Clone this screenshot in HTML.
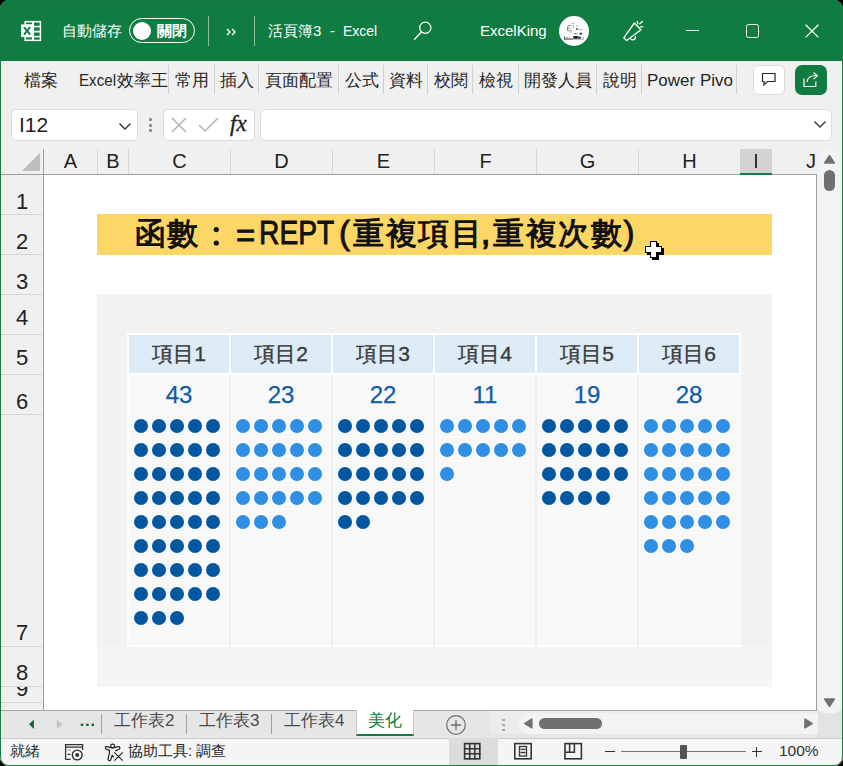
<!DOCTYPE html>
<html><head><meta charset="utf-8">
<style>
*{box-sizing:border-box;margin:0;padding:0}
html,body{width:843px;height:766px;overflow:hidden;background:#000}
body{font-family:"Liberation Sans",sans-serif;position:relative}
.a{position:absolute}
#win{position:absolute;left:0;top:0;width:843px;height:766px;border-radius:9px;overflow:hidden;background:#f0f0f0}
#title{position:absolute;left:0;top:0;width:843px;height:61px;background:#107c41;color:#fff}
.wt{color:#fff;font-size:14px;white-space:nowrap}
.tab{position:absolute;top:71px;font-size:17px;color:#262626;white-space:nowrap;line-height:20px}
.tsep{position:absolute;top:65px;width:1px;height:29px;background:#d0d0d0}
.ch{position:absolute;top:149px;height:25px;font-size:20px;color:#222;text-align:center;line-height:24px;border-right:1px solid #d5d5d5}
.rh{position:absolute;left:1px;width:42px;font-size:22px;color:#222;text-align:center;border-bottom:1px solid #d5d5d5;display:flex;align-items:flex-end;justify-content:center;overflow:hidden}
.rh span{display:block;line-height:20px;margin-bottom:2px}
.gl{position:absolute;background:#e1e1e1}
.sh{top:710px;font-size:17px;line-height:22px;color:#4a4a4a;white-space:nowrap}
.st{top:741px;font-size:15px;line-height:20px;color:#2a2a2a;white-space:nowrap}
.tt{top:214px;font-size:30.5px;font-weight:bold;line-height:38px;color:#111;white-space:nowrap}
.tl{top:214px;font-size:33px;font-weight:normal;line-height:38px;color:#111;white-space:nowrap;-webkit-text-stroke:0.9px #111;transform-origin:0 0}
</style></head><body>
<div id="win">
 <div id="title">
  <!-- excel icon -->
  <svg class="a" style="left:16px;top:16px" width="30" height="30" viewBox="0 0 30 30">
   <rect x="8.4" y="4.9" width="16.7" height="20.2" fill="#fff"/>
   <g fill="#107c41">
    <rect x="18" y="6.5" width="5.7" height="3.3"/><rect x="18" y="11.4" width="5.7" height="3.3"/><rect x="18" y="16.5" width="5.7" height="3.3"/><rect x="18" y="21.4" width="5.7" height="2.3"/>
    <rect x="10" y="6.5" width="6" height="1.9"/><rect x="10" y="21.4" width="6" height="2.1"/>
   </g>
   <rect x="5.1" y="8.4" width="11.9" height="12.6" fill="#fff"/>
   <path d="M8 11.2L14.2 18.7M14.2 11.2L8 18.7" stroke="#107c41" stroke-width="1.9"/>
  </svg>
  <div class="a wt" style="left:62px;top:22px;font-size:15px;line-height:18px">自動儲存</div>
  <div class="a" style="left:129px;top:18px;width:66px;height:25px;border:1.5px solid #fff;border-radius:13px"></div>
  <div class="a" style="left:133px;top:21.5px;width:18px;height:18px;border-radius:50%;background:#fff"></div>
  <div class="a wt" style="left:157px;top:22px;font-size:15px;line-height:18px;font-weight:bold">關閉</div>
  <div class="a" style="left:208px;top:16px;width:1px;height:30px;background:#8fbfa3"></div>
  <svg class="a" style="left:226px;top:28px" width="11" height="8" viewBox="0 0 11 8"><path d="M1 1l3 3-3 3M6 1l3 3-3 3" fill="none" stroke="#fff" stroke-width="1.4"/></svg>
  <div class="a" style="left:254px;top:16px;width:1px;height:30px;background:#8fbfa3"></div>
  <div class="a wt" style="left:268px;top:22px;font-size:15px;line-height:18px">活頁簿3</div><div class="a wt" style="left:330px;top:22px;font-size:15px;line-height:18px">-</div><div class="a wt" style="left:343px;top:22px;font-size:14px;line-height:18px">Excel</div>
  <svg class="a" style="left:406px;top:14px" width="34" height="34" viewBox="0 0 34 34">
   <circle cx="19.3" cy="13.8" r="5.6" fill="none" stroke="#fff" stroke-width="1.2"/>
   <path d="M15.4 18L8.6 25.2" stroke="#fff" stroke-width="1.3" stroke-linecap="round"/>
  </svg>
  <div class="a wt" style="left:480px;top:22px;font-size:15px;line-height:18px">ExcelKing</div>
  <svg class="a" style="left:556px;top:14px" width="36" height="34" viewBox="0 0 36 34">
   <circle cx="18" cy="17" r="15" fill="#fff"/>
   <g stroke="#555" stroke-width="0.7" fill="none">
    <path d="M15.5 9.3h3" stroke="#999"/>
    <path d="M11.5 12.5v4.5M12 11.7h3.5M12 14.2h2.5M12 16.8h4" />
    <path d="M16.8 13.7h1.2M17.5 11.5v1.5" stroke="#777"/>
    <path d="M21.2 11.3v1.7M22.5 15.3h1.3M21 18.7v1.5M24.5 15.5h1.5" stroke="#666"/>
    <path d="M14.5 18.5h1.5" stroke="#aaa"/>
   </g>
   <g fill="#333">
    <rect x="20" y="14.2" width="1.6" height="1.6"/><rect x="18.3" y="19.2" width="1.7" height="0.9"/><rect x="23.5" y="18.8" width="2.6" height="1.8"/>
   </g>
   <g fill="#222">
    <rect x="8" y="22.3" width="0.8" height="2.5"/><rect x="8" y="24.6" width="9" height="0.9"/><rect x="10" y="23.2" width="1.5" height="0.8" fill="#666"/><rect x="13" y="23.5" width="1.2" height="0.8" fill="#666"/>
    <rect x="17.3" y="22" width="4.5" height="2.8"/><rect x="22" y="22.5" width="2.8" height="2.3" fill="#444"/><rect x="25.5" y="23.5" width="0.9" height="0.9" fill="#555"/><rect x="27" y="23.5" width="0.9" height="0.9" fill="#555"/>
    <rect x="17" y="25.3" width="11" height="0.6" fill="#999"/>
   </g>
  </svg>
  <svg class="a" style="left:616px;top:14px" width="34" height="34" viewBox="0 0 34 34">
   <path d="M7.8 23.8L18.4 9 25 15.8 10.6 26.4z" fill="none" stroke="#fff" stroke-width="1.3" stroke-linejoin="round"/>
   <path d="M14.3 24.1a2.6 2.6 0 0 0 5 -1.8" fill="none" stroke="#fff" stroke-width="1.3"/>
   <path d="M21.3 7.3l0.4 2.3M23.8 9.8l2.6-2.4M24.6 12.7l2.2 0.2" stroke="#fff" stroke-width="1.3" stroke-linecap="round"/>
  </svg>
  <div class="a" style="left:685.5px;top:29.6px;width:13px;height:1.2px;background:#fff"></div>
  <div class="a" style="left:745.5px;top:24.4px;width:13.2px;height:13.2px;border:1.3px solid #fff;border-radius:2.5px"></div>
  <svg class="a" style="left:794px;top:14px" width="34" height="34" viewBox="0 0 34 34"><path d="M11.6 10.8L24.4 23.4M24.4 10.8L11.6 23.4" stroke="#fff" stroke-width="1.3"/></svg>
 </div>

 <!-- ribbon tabs -->
 <div class="tab" style="left:24px">檔案</div>
 <div class="tab" style="left:79px"><span style="display:inline-block;transform:scaleX(.89);transform-origin:0 0;width:38px">Excel</span>效率王</div>
 <div class="tsep" style="left:168px"></div>
 <div class="tab" style="left:175px">常用</div>
 <div class="tsep" style="left:214px"></div>
 <div class="tab" style="left:220px">插入</div>
 <div class="tsep" style="left:258px"></div>
 <div class="tab" style="left:265px">頁面配置</div>
 <div class="tsep" style="left:338px"></div>
 <div class="tab" style="left:345px">公式</div>
 <div class="tsep" style="left:383px"></div>
 <div class="tab" style="left:389px">資料</div>
 <div class="tsep" style="left:427px"></div>
 <div class="tab" style="left:434px">校閱</div>
 <div class="tsep" style="left:472px"></div>
 <div class="tab" style="left:479px">檢視</div>
 <div class="tsep" style="left:518px"></div>
 <div class="tab" style="left:524px">開發人員</div>
 <div class="tsep" style="left:596px"></div>
 <div class="tab" style="left:603px">說明</div>
 <div class="tsep" style="left:641px"></div>
 <div class="tab" style="left:647px;width:86px;overflow:hidden">Power Pivot</div>
 <div class="tsep" style="left:736px"></div>
 <div class="a" style="left:753px;top:65px;width:32px;height:30px;background:#fff;border:1px solid #d9d9d9;border-radius:6px"></div>
 <div class="a" style="left:795px;top:65px;width:32px;height:30px;background:#107c41;border-radius:7px"></div>
 <svg class="a" style="left:748px;top:60px" width="84" height="40" viewBox="0 0 84 40">
  <path d="M14.5 13.5h12.5v8h-7.5l-3.5 3.3v-3.3h-1.5z" fill="none" stroke="#262626" stroke-width="1.2" stroke-linejoin="miter"/>
  <path d="M61 18.5c0-3 -0.5 0 0 0" fill="none"/>
  <path d="M56 18.5v8h11.8v-5" fill="none" stroke="#fff" stroke-width="1.2"/>
  <path d="M59 22c0.5-4 3-6.5 9-6.5" fill="none" stroke="#fff" stroke-width="1.2"/>
  <path d="M65.5 12.5l3.8 3.3-3.8 3.3" fill="none" stroke="#fff" stroke-width="1.2" stroke-linejoin="miter"/>
 </svg>

 <!-- formula bar -->
 <div class="a" style="left:11px;top:109px;width:127px;height:32px;background:#fff;border:1px solid #dcdcdc;border-radius:5px"></div>
 <div class="a" style="left:19px;top:112.5px;font-size:21px;line-height:24px;color:#222">I12</div>
 <svg class="a" style="left:118px;top:121.5px" width="14" height="9" viewBox="0 0 14 9"><path d="M1.5 1.5l5.5 5.5 5.5-5.5" fill="none" stroke="#333" stroke-width="1.4"/></svg>
 <div class="a" style="left:149px;top:118px;width:3px;height:3px;background:#8a8a8a;border-radius:1px"></div>
 <div class="a" style="left:149px;top:123.5px;width:3px;height:3px;background:#8a8a8a;border-radius:1px"></div>
 <div class="a" style="left:149px;top:129px;width:3px;height:3px;background:#8a8a8a;border-radius:1px"></div>
 <div class="a" style="left:163px;top:109px;width:92px;height:32px;background:#fff;border:1px solid #dcdcdc;border-radius:5px"></div>
 <svg class="a" style="left:170px;top:116px" width="18" height="18" viewBox="0 0 18 18"><path d="M2 2L16 16M16 2L2 16" stroke="#b3b3b3" stroke-width="1.5"/></svg>
 <svg class="a" style="left:197px;top:116px" width="24" height="18" viewBox="0 0 24 18"><path d="M2 9l6 6L21 2" fill="none" stroke="#b3b3b3" stroke-width="1.5"/></svg>
 <div class="a" style="left:230px;top:112px;font-family:'Liberation Serif',serif;font-style:italic;font-weight:normal;font-size:23px;line-height:24px;color:#222;-webkit-text-stroke:0.35px #222">fx</div>
 <div class="a" style="left:260px;top:109px;width:572px;height:32px;background:#fff;border:1px solid #dcdcdc;border-radius:5px"></div>
 <svg class="a" style="left:813px;top:120px" width="14" height="9" viewBox="0 0 14 9"><path d="M1.5 1.5l5.5 5.5 5.5-5.5" fill="none" stroke="#333" stroke-width="1.4"/></svg>

 <!-- headers -->
 <div class="a" style="left:0;top:149px;width:817px;height:26px;background:#f0f0f0;border-bottom:1px solid #9e9e9e"></div>
 <svg class="a" style="left:22px;top:153px" width="19" height="19" viewBox="0 0 19 19"><path d="M18 0V18H0z" fill="#bdbdbd"/></svg>
 <div class="a" style="left:43px;top:149px;width:1px;height:26px;background:#9e9e9e"></div>
 <div class="ch" style="left:44px;width:54px">A</div>
 <div class="ch" style="left:98px;width:31px">B</div>
 <div class="ch" style="left:129px;width:102px">C</div>
 <div class="ch" style="left:231px;width:102px">D</div>
 <div class="ch" style="left:333px;width:102px">E</div>
 <div class="ch" style="left:435px;width:102px">F</div>
 <div class="ch" style="left:537px;width:102px">G</div>
 <div class="ch" style="left:639px;width:102px">H</div>
 <div class="ch" style="left:740px;width:32px;background:#d3d3d3;border-right:none;height:24px"><span style="display:inline-block;width:1.1px;height:14px;background:#333;vertical-align:middle;margin-top:-3px"></span></div>
 <div class="a" style="left:740px;top:173px;width:32px;height:2px;background:#107c41"></div>
 <div class="ch" style="left:773px;width:44px;border-right:none;text-align:left;padding-left:33px">J</div>
 <div class="a" style="left:0;top:175px;width:43px;height:535px;background:#f0f0f0"></div>
 <div class="a" style="left:43px;top:175px;width:1px;height:535px;background:#9e9e9e"></div>
 <div class="a" style="left:44px;top:175px;width:773px;height:535px;background:#fff;overflow:hidden" id="grid"></div>

 <!-- grid content -->
 <div class="a" style="left:97px;top:214px;width:675px;height:41px;background:#fdd766"></div>
 <div class="a tt" style="left:135px;letter-spacing:1px">函數</div><svg class="a" style="left:210px;top:224px" width="12" height="24" viewBox="0 0 12 24"><circle cx="6.3" cy="5.6" r="2.6" fill="#111"/><circle cx="6.3" cy="19" r="2.6" fill="#111"/></svg><div class="a tl" style="left:236px;top:217px">=</div><div class="a tl" style="left:259px;top:213px;font-size:34px;transform:scaleX(0.83)">REPT</div><div class="a tl" style="left:339px;">(</div><div class="a tt" style="left:353px;letter-spacing:1.5px">重複項目</div><div class="a tl" style="left:481px;-webkit-text-stroke:1.3px #111">,</div><div class="a tt" style="left:493px;letter-spacing:1.5px">重複次數</div><div class="a tl" style="left:623.5px;">)</div>
 <div class="a" style="left:97px;top:294px;width:675px;height:393px;background:#f2f2f2"></div>
 <div class="a" style="left:97px;top:646px;width:675px;height:41px;background:#f5f5f5"></div>
 <div class="a" style="left:127px;top:333px;width:614px;height:314px;background:#fff"></div>
 <div class="a" style="left:129px;top:335px;width:100px;height:38px;background:#ddebf7;font-size:21px;line-height:38px;text-align:center;color:#3b3b3b;-webkit-text-stroke:0.35px #3b3b3b">項目1</div>
 <div class="a" style="left:129px;top:375px;width:100px;height:270px;background:#f8f8f8"></div>
 <div class="a" style="left:129px;top:381px;width:100px;font-size:24px;line-height:28px;text-align:center;color:#0f5ca8;-webkit-text-stroke:0.25px #0f5ca8">43</div>
 <svg class="a" style="left:128px;top:412px" width="102" height="220"><circle cx="13" cy="14" r="7" fill="#0058a3"/><circle cx="31" cy="14" r="7" fill="#0058a3"/><circle cx="49" cy="14" r="7" fill="#0058a3"/><circle cx="67" cy="14" r="7" fill="#0058a3"/><circle cx="85" cy="14" r="7" fill="#0058a3"/><circle cx="13" cy="38" r="7" fill="#0058a3"/><circle cx="31" cy="38" r="7" fill="#0058a3"/><circle cx="49" cy="38" r="7" fill="#0058a3"/><circle cx="67" cy="38" r="7" fill="#0058a3"/><circle cx="85" cy="38" r="7" fill="#0058a3"/><circle cx="13" cy="62" r="7" fill="#0058a3"/><circle cx="31" cy="62" r="7" fill="#0058a3"/><circle cx="49" cy="62" r="7" fill="#0058a3"/><circle cx="67" cy="62" r="7" fill="#0058a3"/><circle cx="85" cy="62" r="7" fill="#0058a3"/><circle cx="13" cy="86" r="7" fill="#0058a3"/><circle cx="31" cy="86" r="7" fill="#0058a3"/><circle cx="49" cy="86" r="7" fill="#0058a3"/><circle cx="67" cy="86" r="7" fill="#0058a3"/><circle cx="85" cy="86" r="7" fill="#0058a3"/><circle cx="13" cy="110" r="7" fill="#0058a3"/><circle cx="31" cy="110" r="7" fill="#0058a3"/><circle cx="49" cy="110" r="7" fill="#0058a3"/><circle cx="67" cy="110" r="7" fill="#0058a3"/><circle cx="85" cy="110" r="7" fill="#0058a3"/><circle cx="13" cy="134" r="7" fill="#0058a3"/><circle cx="31" cy="134" r="7" fill="#0058a3"/><circle cx="49" cy="134" r="7" fill="#0058a3"/><circle cx="67" cy="134" r="7" fill="#0058a3"/><circle cx="85" cy="134" r="7" fill="#0058a3"/><circle cx="13" cy="158" r="7" fill="#0058a3"/><circle cx="31" cy="158" r="7" fill="#0058a3"/><circle cx="49" cy="158" r="7" fill="#0058a3"/><circle cx="67" cy="158" r="7" fill="#0058a3"/><circle cx="85" cy="158" r="7" fill="#0058a3"/><circle cx="13" cy="182" r="7" fill="#0058a3"/><circle cx="31" cy="182" r="7" fill="#0058a3"/><circle cx="49" cy="182" r="7" fill="#0058a3"/><circle cx="67" cy="182" r="7" fill="#0058a3"/><circle cx="85" cy="182" r="7" fill="#0058a3"/><circle cx="13" cy="206" r="7" fill="#0058a3"/><circle cx="31" cy="206" r="7" fill="#0058a3"/><circle cx="49" cy="206" r="7" fill="#0058a3"/></svg>
 <div class="a" style="left:231px;top:335px;width:100px;height:38px;background:#ddebf7;font-size:21px;line-height:38px;text-align:center;color:#3b3b3b;-webkit-text-stroke:0.35px #3b3b3b">項目2</div>
 <div class="a" style="left:231px;top:375px;width:100px;height:270px;background:#f8f8f8"></div>
 <div class="a" style="left:231px;top:381px;width:100px;font-size:24px;line-height:28px;text-align:center;color:#0f5ca8;-webkit-text-stroke:0.25px #0f5ca8">23</div>
 <svg class="a" style="left:230px;top:412px" width="102" height="220"><circle cx="13" cy="14" r="7" fill="#2f8fe5"/><circle cx="31" cy="14" r="7" fill="#2f8fe5"/><circle cx="49" cy="14" r="7" fill="#2f8fe5"/><circle cx="67" cy="14" r="7" fill="#2f8fe5"/><circle cx="85" cy="14" r="7" fill="#2f8fe5"/><circle cx="13" cy="38" r="7" fill="#2f8fe5"/><circle cx="31" cy="38" r="7" fill="#2f8fe5"/><circle cx="49" cy="38" r="7" fill="#2f8fe5"/><circle cx="67" cy="38" r="7" fill="#2f8fe5"/><circle cx="85" cy="38" r="7" fill="#2f8fe5"/><circle cx="13" cy="62" r="7" fill="#2f8fe5"/><circle cx="31" cy="62" r="7" fill="#2f8fe5"/><circle cx="49" cy="62" r="7" fill="#2f8fe5"/><circle cx="67" cy="62" r="7" fill="#2f8fe5"/><circle cx="85" cy="62" r="7" fill="#2f8fe5"/><circle cx="13" cy="86" r="7" fill="#2f8fe5"/><circle cx="31" cy="86" r="7" fill="#2f8fe5"/><circle cx="49" cy="86" r="7" fill="#2f8fe5"/><circle cx="67" cy="86" r="7" fill="#2f8fe5"/><circle cx="85" cy="86" r="7" fill="#2f8fe5"/><circle cx="13" cy="110" r="7" fill="#2f8fe5"/><circle cx="31" cy="110" r="7" fill="#2f8fe5"/><circle cx="49" cy="110" r="7" fill="#2f8fe5"/></svg>
 <div class="a" style="left:333px;top:335px;width:100px;height:38px;background:#ddebf7;font-size:21px;line-height:38px;text-align:center;color:#3b3b3b;-webkit-text-stroke:0.35px #3b3b3b">項目3</div>
 <div class="a" style="left:333px;top:375px;width:100px;height:270px;background:#f8f8f8"></div>
 <div class="a" style="left:333px;top:381px;width:100px;font-size:24px;line-height:28px;text-align:center;color:#0f5ca8;-webkit-text-stroke:0.25px #0f5ca8">22</div>
 <svg class="a" style="left:332px;top:412px" width="102" height="220"><circle cx="13" cy="14" r="7" fill="#0058a3"/><circle cx="31" cy="14" r="7" fill="#0058a3"/><circle cx="49" cy="14" r="7" fill="#0058a3"/><circle cx="67" cy="14" r="7" fill="#0058a3"/><circle cx="85" cy="14" r="7" fill="#0058a3"/><circle cx="13" cy="38" r="7" fill="#0058a3"/><circle cx="31" cy="38" r="7" fill="#0058a3"/><circle cx="49" cy="38" r="7" fill="#0058a3"/><circle cx="67" cy="38" r="7" fill="#0058a3"/><circle cx="85" cy="38" r="7" fill="#0058a3"/><circle cx="13" cy="62" r="7" fill="#0058a3"/><circle cx="31" cy="62" r="7" fill="#0058a3"/><circle cx="49" cy="62" r="7" fill="#0058a3"/><circle cx="67" cy="62" r="7" fill="#0058a3"/><circle cx="85" cy="62" r="7" fill="#0058a3"/><circle cx="13" cy="86" r="7" fill="#0058a3"/><circle cx="31" cy="86" r="7" fill="#0058a3"/><circle cx="49" cy="86" r="7" fill="#0058a3"/><circle cx="67" cy="86" r="7" fill="#0058a3"/><circle cx="85" cy="86" r="7" fill="#0058a3"/><circle cx="13" cy="110" r="7" fill="#0058a3"/><circle cx="31" cy="110" r="7" fill="#0058a3"/></svg>
 <div class="a" style="left:435px;top:335px;width:100px;height:38px;background:#ddebf7;font-size:21px;line-height:38px;text-align:center;color:#3b3b3b;-webkit-text-stroke:0.35px #3b3b3b">項目4</div>
 <div class="a" style="left:435px;top:375px;width:100px;height:270px;background:#f8f8f8"></div>
 <div class="a" style="left:435px;top:381px;width:100px;font-size:24px;line-height:28px;text-align:center;color:#0f5ca8;-webkit-text-stroke:0.25px #0f5ca8">11</div>
 <svg class="a" style="left:434px;top:412px" width="102" height="220"><circle cx="13" cy="14" r="7" fill="#2f8fe5"/><circle cx="31" cy="14" r="7" fill="#2f8fe5"/><circle cx="49" cy="14" r="7" fill="#2f8fe5"/><circle cx="67" cy="14" r="7" fill="#2f8fe5"/><circle cx="85" cy="14" r="7" fill="#2f8fe5"/><circle cx="13" cy="38" r="7" fill="#2f8fe5"/><circle cx="31" cy="38" r="7" fill="#2f8fe5"/><circle cx="49" cy="38" r="7" fill="#2f8fe5"/><circle cx="67" cy="38" r="7" fill="#2f8fe5"/><circle cx="85" cy="38" r="7" fill="#2f8fe5"/><circle cx="13" cy="62" r="7" fill="#2f8fe5"/></svg>
 <div class="a" style="left:537px;top:335px;width:100px;height:38px;background:#ddebf7;font-size:21px;line-height:38px;text-align:center;color:#3b3b3b;-webkit-text-stroke:0.35px #3b3b3b">項目5</div>
 <div class="a" style="left:537px;top:375px;width:100px;height:270px;background:#f8f8f8"></div>
 <div class="a" style="left:537px;top:381px;width:100px;font-size:24px;line-height:28px;text-align:center;color:#0f5ca8;-webkit-text-stroke:0.25px #0f5ca8">19</div>
 <svg class="a" style="left:536px;top:412px" width="102" height="220"><circle cx="13" cy="14" r="7" fill="#0058a3"/><circle cx="31" cy="14" r="7" fill="#0058a3"/><circle cx="49" cy="14" r="7" fill="#0058a3"/><circle cx="67" cy="14" r="7" fill="#0058a3"/><circle cx="85" cy="14" r="7" fill="#0058a3"/><circle cx="13" cy="38" r="7" fill="#0058a3"/><circle cx="31" cy="38" r="7" fill="#0058a3"/><circle cx="49" cy="38" r="7" fill="#0058a3"/><circle cx="67" cy="38" r="7" fill="#0058a3"/><circle cx="85" cy="38" r="7" fill="#0058a3"/><circle cx="13" cy="62" r="7" fill="#0058a3"/><circle cx="31" cy="62" r="7" fill="#0058a3"/><circle cx="49" cy="62" r="7" fill="#0058a3"/><circle cx="67" cy="62" r="7" fill="#0058a3"/><circle cx="85" cy="62" r="7" fill="#0058a3"/><circle cx="13" cy="86" r="7" fill="#0058a3"/><circle cx="31" cy="86" r="7" fill="#0058a3"/><circle cx="49" cy="86" r="7" fill="#0058a3"/><circle cx="67" cy="86" r="7" fill="#0058a3"/></svg>
 <div class="a" style="left:639px;top:335px;width:100px;height:38px;background:#ddebf7;font-size:21px;line-height:38px;text-align:center;color:#3b3b3b;-webkit-text-stroke:0.35px #3b3b3b">項目6</div>
 <div class="a" style="left:639px;top:375px;width:102px;height:270px;background:#f8f8f8"></div>
 <div class="a" style="left:639px;top:381px;width:100px;font-size:24px;line-height:28px;text-align:center;color:#0f5ca8;-webkit-text-stroke:0.25px #0f5ca8">28</div>
 <svg class="a" style="left:638px;top:412px" width="102" height="220"><circle cx="13" cy="14" r="7" fill="#2f8fe5"/><circle cx="31" cy="14" r="7" fill="#2f8fe5"/><circle cx="49" cy="14" r="7" fill="#2f8fe5"/><circle cx="67" cy="14" r="7" fill="#2f8fe5"/><circle cx="85" cy="14" r="7" fill="#2f8fe5"/><circle cx="13" cy="38" r="7" fill="#2f8fe5"/><circle cx="31" cy="38" r="7" fill="#2f8fe5"/><circle cx="49" cy="38" r="7" fill="#2f8fe5"/><circle cx="67" cy="38" r="7" fill="#2f8fe5"/><circle cx="85" cy="38" r="7" fill="#2f8fe5"/><circle cx="13" cy="62" r="7" fill="#2f8fe5"/><circle cx="31" cy="62" r="7" fill="#2f8fe5"/><circle cx="49" cy="62" r="7" fill="#2f8fe5"/><circle cx="67" cy="62" r="7" fill="#2f8fe5"/><circle cx="85" cy="62" r="7" fill="#2f8fe5"/><circle cx="13" cy="86" r="7" fill="#2f8fe5"/><circle cx="31" cy="86" r="7" fill="#2f8fe5"/><circle cx="49" cy="86" r="7" fill="#2f8fe5"/><circle cx="67" cy="86" r="7" fill="#2f8fe5"/><circle cx="85" cy="86" r="7" fill="#2f8fe5"/><circle cx="13" cy="110" r="7" fill="#2f8fe5"/><circle cx="31" cy="110" r="7" fill="#2f8fe5"/><circle cx="49" cy="110" r="7" fill="#2f8fe5"/><circle cx="67" cy="110" r="7" fill="#2f8fe5"/><circle cx="85" cy="110" r="7" fill="#2f8fe5"/><circle cx="13" cy="134" r="7" fill="#2f8fe5"/><circle cx="31" cy="134" r="7" fill="#2f8fe5"/><circle cx="49" cy="134" r="7" fill="#2f8fe5"/></svg>
 <div class="a" style="left:229px;top:375px;width:2px;height:272px;background:#f0f0f0"></div>
 <div class="a" style="left:331px;top:375px;width:2px;height:272px;background:#f0f0f0"></div>
 <div class="a" style="left:433px;top:375px;width:2px;height:272px;background:#f0f0f0"></div>
 <div class="a" style="left:535px;top:375px;width:2px;height:272px;background:#f0f0f0"></div>
 <div class="a" style="left:637px;top:375px;width:2px;height:272px;background:#f0f0f0"></div>
 <div class="rh" style="top:176px;height:39px"><span>1</span></div>
 <div class="rh" style="top:215px;height:40px"><span>2</span></div>
 <div class="rh" style="top:255px;height:40px"><span>3</span></div>
 <div class="rh" style="top:295px;height:40px"><span style="margin-bottom:6px">4</span></div>
 <div class="rh" style="top:335px;height:40px"><span style="margin-bottom:6px">5</span></div>
 <div class="rh" style="top:375px;height:40px"><span>6</span></div>
 <div class="rh" style="top:415px;height:232px"><span style="margin-bottom:3px">7</span></div>
 <div class="rh" style="top:647px;height:40px"><span style="margin-bottom:3px">8</span></div>
 <div class="rh" style="top:687px;height:16px"><span style="margin-bottom:3px">9</span></div>
 <div class="rh" style="top:703px;height:16px"><span></span></div>

<svg class="a" style="left:640px;top:236px" width="30" height="30" viewBox="0 0 30 30" shape-rendering="crispEdges">
  <g fill="#000" transform="translate(2 2)"><rect x="10" y="5" width="7" height="17"/><rect x="5" y="10" width="17" height="7"/></g>
  <g fill="#000"><rect x="10" y="5" width="7" height="17"/><rect x="5" y="10" width="17" height="7"/></g>
  <g fill="#fff"><rect x="11" y="6" width="5" height="15"/><rect x="6" y="11" width="15" height="5"/></g>
 </svg>
 <!-- sheet tabs bar -->
 <div class="a" style="left:0;top:710px;width:843px;height:28px;background:#e6e6e6"></div>
 <div class="a" style="left:0;top:710px;width:817px;height:1px;background:#a9a9a9"></div>
 <div class="a" style="left:490px;top:711px;width:327px;height:23px;background:#ececec"></div>
 <div class="a" style="left:817px;top:710px;width:26px;height:28px;background:#e3e3e3"></div>
 <svg class="a" style="left:20px;top:712px" width="90" height="24" viewBox="0 0 90 24">
  <path d="M13.9 7.6V17L9 12.3z" fill="#0f6334"/>
  <path d="M36.8 7.8V17L42.2 12.4z" fill="#c2c2c2"/>
  <rect x="60.8" y="11.6" width="2.4" height="2.4" fill="#0f6334"/><rect x="66.2" y="11.6" width="2.4" height="2.4" fill="#0f6334"/><rect x="71.6" y="11.6" width="2.4" height="2.4" fill="#0f6334"/>
 </svg>
 <div class="a" style="left:101px;top:714px;width:1px;height:20px;background:#a0a0a0"></div>
 <div class="a sh" style="left:114px">工作表2</div>
 <div class="a" style="left:186px;top:714px;width:1px;height:20px;background:#a0a0a0"></div>
 <div class="a sh" style="left:199px">工作表3</div>
 <div class="a" style="left:271px;top:714px;width:1px;height:20px;background:#a0a0a0"></div>
 <div class="a sh" style="left:284px">工作表4</div>
 <div class="a" style="left:356px;top:710px;width:58px;height:26px;background:#fff;border-left:1px solid #c8c8c8;border-right:1px solid #c8c8c8;border-bottom:2px solid #107c41"></div>
 <div class="a sh" style="left:368px;color:#107c41">美化</div>
 <svg class="a" style="left:445px;top:714px" width="22" height="22" viewBox="0 0 22 22"><circle cx="11" cy="11" r="9.3" fill="none" stroke="#6b6b6b" stroke-width="1.2"/><path d="M11 6v10M6 11h10" stroke="#6b6b6b" stroke-width="1.3"/></svg>
 <div class="a" style="left:502px;top:718.5px;width:2.6px;height:2.6px;background:#a6a6a6"></div>
 <div class="a" style="left:502px;top:723.5px;width:2.6px;height:2.6px;background:#a6a6a6"></div>
 <div class="a" style="left:502px;top:728.5px;width:2.6px;height:2.6px;background:#a6a6a6"></div>
 <div class="a" style="left:518.5px;top:713px;width:299.5px;height:20.5px;background:#f3f3f3;border-radius:10px 0 0 10px"></div>
 <svg class="a" style="left:523px;top:717px" width="12" height="13" viewBox="0 0 12 13"><path d="M8.8 2.2V10.8L2 6.5z" fill="#707070" stroke="#707070" stroke-width="1.6" stroke-linejoin="round"/></svg>
 <div class="a" style="left:539px;top:718px;width:63px;height:11px;background:#707070;border-radius:5.5px"></div>
 <svg class="a" style="left:803px;top:717px" width="12" height="13" viewBox="0 0 12 13"><path d="M2 2.2V10.8L9 6.5z" fill="#707070" stroke="#707070" stroke-width="1.6" stroke-linejoin="round"/></svg>

 <!-- vertical scrollbar -->
 <div class="a" style="left:816px;top:175px;width:1px;height:536px;background:#a0a0a0"></div>
 <div class="a" style="left:819px;top:149px;width:21px;height:564px;background:#f3f3f3;border-radius:10px 10px 5px 5px"></div>
 <svg class="a" style="left:823px;top:154px" width="13" height="11" viewBox="0 0 13 11"><path d="M6.5 1.8L11.3 9H1.7z" fill="#707070" stroke="#707070" stroke-width="1.6" stroke-linejoin="round"/></svg>
 <div class="a" style="left:824px;top:170px;width:11px;height:21px;background:#707070;border-radius:5.5px"></div>
 <svg class="a" style="left:823px;top:697px" width="13" height="11" viewBox="0 0 13 11"><path d="M6.5 9.2L11.3 2H1.7z" fill="#707070" stroke="#707070" stroke-width="1.6" stroke-linejoin="round"/></svg>

 <!-- status bar -->
 <div class="a" style="left:0;top:738px;width:843px;height:28px;background:#f5f5f5;border-top:1px solid #cbcbcb"></div>
 <div class="a st" style="left:10px">就緒</div>
 <svg class="a" style="left:58px;top:738px" width="70" height="28" viewBox="0 0 70 28">
  <path d="M7.6 21.5V6.6H24.6V12" fill="none" stroke="#333" stroke-width="1.3"/>
  <path d="M7.6 9.2h17" stroke="#333" stroke-width="1.3"/>
  <path d="M7.6 21.3h5" stroke="#333" stroke-width="1.3"/>
  <path d="M9.5 12h3.5" stroke="#999" stroke-width="1.2"/><path d="M9.5 16.3h3" stroke="#444" stroke-width="1.3"/>
  <circle cx="19.2" cy="17" r="4.9" fill="#f5f5f5" stroke="#333" stroke-width="1.4"/>
  <circle cx="19.2" cy="17" r="2" fill="#333"/>
 </svg>
 <svg class="a" style="left:100px;top:740px" width="28" height="24" viewBox="0 0 28 24">
  <circle cx="12.6" cy="6" r="1.9" fill="none" stroke="#222" stroke-width="1.2"/>
  <path d="M15.6 10.8C17.5 10 20 9.5 20 8C20 6 17 6.3 15 7.6L10 7.6C8 6.3 5.3 6 5.3 7.8C5.3 9.5 8 9.6 9.6 10.3C9.6 13 9 16 8.1 18.5C7.5 20.5 10 21.5 10.8 19.5L12.2 15.2L13.4 16.8" fill="none" stroke="#222" stroke-width="1.2" stroke-linejoin="round" stroke-linecap="round"/>
  <path d="M14.3 12.3L22.7 20.6M22.7 12.3L14.3 20.6" stroke="#222" stroke-width="1.1"/>
 </svg>
 <div class="a st" style="left:128px">協助工具: 調查</div>
 <div class="a" style="left:449px;top:738px;width:49px;height:28px;background:#dcdcdc"></div>
 <svg class="a" style="left:455px;top:738px" width="135" height="28" viewBox="0 0 135 28">
  <rect x="9.6" y="5.6" width="15.2" height="15.2" fill="none" stroke="#333" stroke-width="1.6"/>
  <path d="M14.7 5v16.5M19.8 5v16.5M9 10.7h16.5M9 15.8h16.5" stroke="#333" stroke-width="1.5"/>
  <rect x="59.8" y="5.6" width="16.4" height="15.2" fill="none" stroke="#333" stroke-width="1.6"/>
  <rect x="64.5" y="8.5" width="7" height="9.5" fill="none" stroke="#333" stroke-width="1.3"/>
  <path d="M65.5 11.3h5M65.5 14.5h5" stroke="#333" stroke-width="1.3"/>
  <rect x="110" y="5.6" width="16.4" height="15.2" fill="none" stroke="#333" stroke-width="1.6"/>
  <path d="M119.4 5v9.3H110M114.6 5v9.3" fill="none" stroke="#333" stroke-width="1.5"/>
 </svg>
 <div class="a" style="left:605px;top:751px;width:10px;height:1.2px;background:#333"></div>
 <div class="a" style="left:621px;top:751px;width:125px;height:1px;background:#777"></div>
 <div class="a" style="left:680px;top:745px;width:7px;height:14px;background:#555;border-radius:1px"></div>
 <div class="a" style="left:752px;top:751px;width:9.5px;height:1.1px;background:#333"></div>
 <div class="a" style="left:756.2px;top:747px;width:1.1px;height:9.5px;background:#333"></div>
 <div class="a st" style="left:779px;font-size:15.5px;top:740.5px;color:#333">100%</div>
</div>
<div class="a" style="left:0;top:0;width:843px;height:766px;border:1px solid #1b7b47;border-radius:9px;pointer-events:none"></div>
</body></html>
